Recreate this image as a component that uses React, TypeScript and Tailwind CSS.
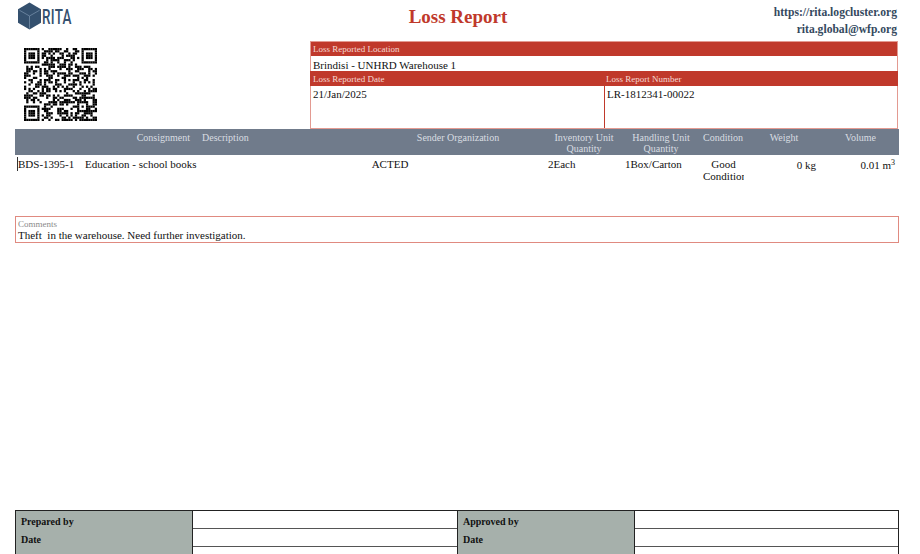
import React from 'react';

// finder patterns are fixed, the rest of the code is seeded so it stays the same every render
const SIZE = 33;

const isReserved = (x: number, y: number) => {
  const inBox = (ox: number, oy: number, s: number) => x >= ox && x < ox + s && y >= oy && y < oy + s;
  return inBox(0, 0, 8) || inBox(SIZE - 8, 0, 8) || inBox(0, SIZE - 8, 8) || inBox(24, 24, 5);
};

const squareCells = (ox: number, oy: number, s: number) => {
  const cells: [number, number][] = [];
  const mid = (s - 1) / 2;
  const coreR = s === 7 ? 1 : 0;
  for (let y = 0; y < s; y++) {
    for (let x = 0; x < s; x++) {
      const ring = x === 0 || y === 0 || x === s - 1 || y === s - 1;
      const core = Math.abs(x - mid) <= coreR && Math.abs(y - mid) <= coreR;
      if (ring || core) cells.push([ox + x, oy + y]);
    }
  }
  return cells;
};

const qrCells = () => {
  const cells: [number, number][] = [
    ...squareCells(0, 0, 7),
    ...squareCells(SIZE - 7, 0, 7),
    ...squareCells(0, SIZE - 7, 7),
    ...squareCells(24, 24, 5),
  ];
  let seed = 1395;
  for (let y = 0; y < SIZE; y++) {
    for (let x = 0; x < SIZE; x++) {
      seed = (seed * 1103515245 + 12345) & 0x7fffffff;
      if (!isReserved(x, y) && (seed >> 16) % 100 < 52) cells.push([x, y]);
    }
  }
  return cells;
};

const QrCode = () => (
  <svg viewBox={`0 0 ${SIZE} ${SIZE}`} className="w-[73px] h-[73px]">
    {qrCells().map(([x, y]) => (
      <rect key={`${x}-${y}`} x={x} y={y} width="1.02" height="1.02" fill="#000" />
    ))}
  </svg>
);

const LogoCube = () => (
  <svg viewBox="0 0 24 28" className="w-[23px] h-7">
    <path d="M12 0 L24 7 V21 L12 28 L0 21 V7 Z" fill="#34506e" />
    <path d="M1.5 8 L12 14 L22.5 8 M12 14 V27" fill="none" stroke="#6f88a3" strokeWidth="0.9" />
  </svg>
);

const SignBlock = ({ title, width }: { title: string; width: string }) => (
  <div className={`flex ${width}`}>
    <div className="w-[176px] shrink-0 bg-[#a6b0ab] font-bold text-[10px] text-[#111] pl-[5px] pt-[2px]">
      <div className="h-[18px] leading-[18px]">{title}</div>
      <div className="h-[18px] leading-[18px]">Date</div>
      <div className="h-[18px] leading-[18px]">Signature</div>
    </div>
    <div className="flex-1 border-l border-[#222]">
      <div className="h-[18px] border-b border-[#555]" />
      <div className="h-[18px] border-b border-[#555]" />
      <div className="h-[18px] border-b border-[#555]" />
    </div>
  </div>
);

export default function App() {
  return (
    <div className="w-[920px] h-[554px] overflow-hidden bg-white font-['Liberation_Serif',serif] text-[11px] text-[#111]">
      {/* Header */}
      <div className="flex h-[41px] pl-[18px] pr-[23px]">
        <div className="w-[292px] flex items-start pt-[2px] gap-[1px]">
          <LogoCube />
          <span className="font-['Roboto',sans-serif] font-medium text-[21px] leading-[30px] text-[#34506e] origin-left scale-x-[0.64] tracking-[0.5px]">RITA</span>
        </div>
        <div className="w-[296px] text-center text-[19px] font-bold text-[#c0392b] leading-[24px] pt-[5px]">Loss Report</div>
        <div className="flex-1 text-right font-bold text-[11.6px] text-[#34495e] pt-[4px] leading-[17px]">
          <div>https://rita.logcluster.org</div>
          <div>rita.global@wfp.org</div>
        </div>
      </div>

      {/* QR + info box */}
      <div className="flex h-[88px]">
        <div className="w-[310px] pl-[24px] pt-[7px]">
          <QrCode />
        </div>
        <div className="w-[588px] border border-[#e39a91] flex flex-col">
          <div className="h-[14px] bg-[#c0392b] text-[#f5d9d5] text-[9px] leading-[14px] pl-[2px]">Loss Reported Location</div>
          <div className="h-[15px] leading-[18px] pl-[2px]">Brindisi - UNHRD Warehouse 1</div>
          <div className="h-[15px] -mx-[1px] bg-[#c0392b] text-[#f5d9d5] text-[9px] leading-[16px] flex">
            <div className="w-[294px] pl-[3px]">Loss Reported Date</div>
            <div className="pl-[2px]">Loss Report Number</div>
          </div>
          <div className="flex-1 flex leading-[17px]">
            <div className="w-[294px] pl-[2px] border-r border-[#c0392b]">21/Jan/2025</div>
            <div className="pl-[2px]">LR-1812341-00022</div>
          </div>
        </div>
      </div>

      {/* Items table */}
      <div className="mx-[15px] w-[884px]">
        <div className="h-[26px] bg-[#707b8b] text-[#d9dde2] text-[10px] leading-[11px] pt-[3px] grid grid-cols-[180px_175px_176px_76px_78px_46px_76px_77px] text-center">
          <div className="text-right pr-[5px]">Consignment</div>
          <div className="text-left pl-[7px]">Description</div>
          <div>Sender Organization</div>
          <div>Inventory Unit<br />Quantity</div>
          <div>Handling Unit<br />Quantity</div>
          <div>Condition</div>
          <div>Weight</div>
          <div>Volume</div>
        </div>
        <div className="h-[61px] pt-[3px] leading-[12px] grid grid-cols-[70px_245px_120px_98px_77px_77px_44px_70px_83px] items-start">
          <div className="ml-[2px] border-l border-[#333] h-[14px] -mt-[1px] pt-[1px]">BDS-1395-1</div>
          <div>Education - school books</div>
          <div className="text-center">ACTED</div>
          <div />
          <div>2Each</div>
          <div>1Box/Carton</div>
          <div className="ml-[1px] w-[41px] overflow-hidden text-center">Good Condition</div>
          <div className="text-right pt-[1px]">0 kg</div>
          <div className="text-right pr-[4px] pt-[1px]">0.01 m<sup className="text-[8px]">3</sup></div>
        </div>
      </div>

      {/* Comments */}
      <div className="mx-[15px] w-[884px] h-[27px] border border-[#e08a80] pl-[2px] pt-[3px]">
        <div className="text-[9px] leading-[9px] text-[#8a8a8a]">Comments</div>
        <div className="leading-[12px]">Theft&nbsp; in the warehouse. Need further investigation.</div>
      </div>

      {/* Signatures */}
      <div className="mt-[267px] mx-[15px] w-[884px] flex border-t border-x border-[#222]">
        <SignBlock title="Prepared by" width="w-[441px]" />
        <div className="flex-1 border-l border-[#222]">
          <SignBlock title="Approved by" width="w-full" />
        </div>
      </div>
    </div>
  );
}
